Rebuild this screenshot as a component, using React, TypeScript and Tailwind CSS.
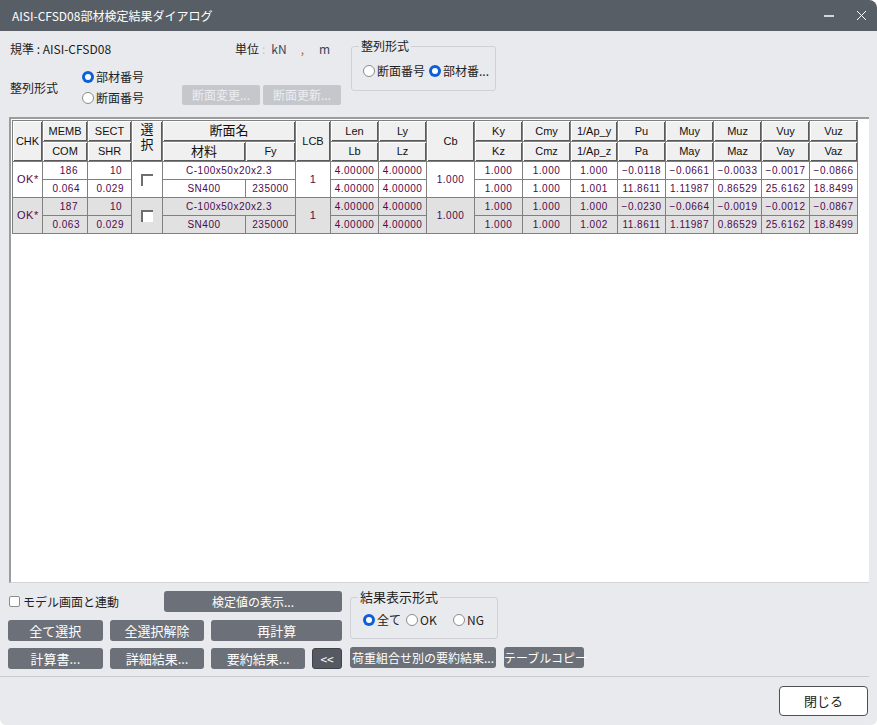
import React from "react";

// 部材検定結果ダイアログ (AISI-CFSD08)

type Row = {
  chk: string;
  memb: string;
  com: string;
  sect: string;
  shr: string;
  name: string;
  mat: string;
  fy: string;
  lcb: string;
  len: string;
  lb: string;
  ly: string;
  lz: string;
  cb: string;
  pairs: [string, string][];
};

const rows: Row[] = [
  {
    chk: "OK*",
    memb: "186",
    com: "0.064",
    sect: "10",
    shr: "0.029",
    name: "C-100x50x20x2.3",
    mat: "SN400",
    fy: "235000",
    lcb: "1",
    len: "4.00000",
    lb: "4.00000",
    ly: "4.00000",
    lz: "4.00000",
    cb: "1.000",
    pairs: [
      ["1.000", "1.000"],
      ["1.000", "1.000"],
      ["1.000", "1.001"],
      ["−0.0118", "11.8611"],
      ["−0.0661", "1.11987"],
      ["−0.0033", "0.86529"],
      ["−0.0017", "25.6162"],
      ["−0.0866", "18.8499"],
    ],
  },
  {
    chk: "OK*",
    memb: "187",
    com: "0.063",
    sect: "10",
    shr: "0.029",
    name: "C-100x50x20x2.3",
    mat: "SN400",
    fy: "235000",
    lcb: "1",
    len: "4.00000",
    lb: "4.00000",
    ly: "4.00000",
    lz: "4.00000",
    cb: "1.000",
    pairs: [
      ["1.000", "1.000"],
      ["1.000", "1.000"],
      ["1.000", "1.002"],
      ["−0.0230", "11.8611"],
      ["−0.0664", "1.11987"],
      ["−0.0019", "0.86529"],
      ["−0.0012", "25.6162"],
      ["−0.0867", "18.8499"],
    ],
  },
];

const pairHeads: [string, string][] = [
  ["Ky", "Kz"],
  ["Cmy", "Cmz"],
  ["1/Ap_y", "1/Ap_z"],
  ["Pu", "Pa"],
  ["Muy", "May"],
  ["Muz", "Maz"],
  ["Vuy", "Vay"],
  ["Vuz", "Vaz"],
];

const TH =
  "border border-[#808080] bg-[#f0f0f0] shadow-[inset_1px_1px_0_#ffffff,inset_-1px_-1px_0_#5a5a5a] text-center font-normal text-[11px] text-[#111] p-0";
const TD = "border border-[#808080] p-0 text-center";

function Radio({ checked, label }: { checked?: boolean; label: string }) {
  return (
    <span className="flex items-center gap-[2px] whitespace-nowrap">
      {checked ? (
        <span className="w-[12px] h-[12px] shrink-0 rounded-full bg-[#0b5fd7] flex items-center justify-center">
          <span className="w-[6px] h-[6px] rounded-full bg-white" />
        </span>
      ) : (
        <span className="w-[12px] h-[12px] shrink-0 rounded-full border border-[#8c8c8c] bg-white" />
      )}
      <span>{label}</span>
    </span>
  );
}

function Btn({
  className,
  children,
}: {
  className: string;
  children: React.ReactNode;
}) {
  return (
    <button
      className={
        "h-[21px] rounded-[3px] bg-[#6b7079] text-white text-[12px] leading-none whitespace-nowrap " +
        className
      }
    >
      {children}
    </button>
  );
}

function CheckCell() {
  return (
    <span className="inline-block w-[12px] h-[12px] bg-white border-t-2 border-l-2 border-[#6e6e6e] align-middle" />
  );
}

export default function App() {
  return (
    <div className="w-[877px] h-[725px] bg-white">
      <div className="w-[877px] h-[725px] bg-[#e9eaee] flex flex-col rounded-tr-[8px] rounded-b-[6px] overflow-hidden font-['Noto_Sans_CJK_JP','Liberation_Sans',sans-serif] text-[12px] text-[#222]">
        {/* Title bar */}
        <div className="h-[31px] bg-[#585e66] flex items-center pl-[12px] pr-[10px] text-white">
          <span className="text-[12px]">AISI-CFSD08部材検定結果ダイアログ</span>
          <div className="ml-auto flex items-center gap-[22px]">
            <svg width="10" height="10" viewBox="0 0 10 10">
              <line x1="0" y1="5" x2="10" y2="5" stroke="#ffffff" strokeWidth="1.5" />
            </svg>
            <svg width="11" height="11" viewBox="0 0 11 11">
              <path d="M1 1 L10 10 M10 1 L1 10" stroke="#ffffff" strokeWidth="1" />
            </svg>
          </div>
        </div>

        {/* Top settings */}
        <div className="h-[86px] flex">
          <div className="w-[341px] pl-[10px] pt-[9px]">
            <div className="h-[18px] flex items-center">
              <span className="w-[225px]">規準 : AISI-CFSD08</span>
              <span>単位</span>
              <span className="ml-[3px] text-[#c8c8c8]">:</span>
              <span className="ml-[6px] text-[#3b4456]">kN</span>
              <span className="ml-[14px] text-[#c06030]">,</span>
              <span className="ml-[15px] text-[#3b4456]">m</span>
            </div>
            <div className="flex mt-[10px]">
              <span className="w-[74px] self-center">整列形式</span>
              <div className="w-[103px] flex flex-col gap-[3px] leading-[18px]">
                <Radio checked label="部材番号" />
                <Radio label="断面番号" />
              </div>
              <div className="self-end flex gap-[3px] mb-[2px]">
                <button className="w-[78px] h-[20px] rounded-[2px] bg-[#c4c7cc] text-[#eceef1] text-[12px]">
                  断面変更...
                </button>
                <button className="w-[78px] h-[20px] rounded-[2px] bg-[#c4c7cc] text-[#eceef1] text-[12px]">
                  断面更新...
                </button>
              </div>
            </div>
          </div>
          <fieldset className="ml-[10px] mt-[8px] w-[145px] h-[52px] border border-[#cfd1d6] rounded-[3px] pl-[11px] pt-[9px]">
            <legend className="px-[2px] leading-[14px] -ml-[4px]">整列形式</legend>
            <div className="flex gap-[4px] whitespace-nowrap">
              <Radio label="断面番号" />
              <Radio checked label="部材番..." />
            </div>
          </fieldset>
        </div>

        {/* Results table */}
        <div className="ml-[9px] w-[860px] h-[466px] bg-white border-t-2 border-l-2 border-[#9c9c9c] border-b border-b-[#d4d4d4] pt-[1px] pl-[1px]">
          <table className="table-fixed border-collapse w-[846px] font-['Liberation_Sans','Noto_Sans_CJK_JP',sans-serif]">
            <colgroup>
              <col className="w-[30px]" />
              <col className="w-[45px]" />
              <col className="w-[44px]" />
              <col className="w-[31px]" />
              <col className="w-[83px]" />
              <col className="w-[50px]" />
              <col className="w-[35px]" />
              <col className="w-[48px]" />
              <col className="w-[48px]" />
              <col className="w-[48px]" />
              <col className="w-[48px]" />
              <col className="w-[48px]" />
              <col className="w-[47px]" />
              <col className="w-[48px]" />
              <col className="w-[48px]" />
              <col className="w-[48px]" />
              <col className="w-[48px]" />
              <col className="w-[48px]" />
            </colgroup>
            <thead>
              <tr className="h-[20px]">
                <th rowSpan={2} className={TH}>CHK</th>
                <th className={TH}>MEMB</th>
                <th className={TH}>SECT</th>
                <th rowSpan={2} className={TH + " align-top"}>
                  <div className="text-[13px] leading-[15px] pt-[1px]">
                    <div>選</div>
                    <div>択</div>
                  </div>
                </th>
                <th colSpan={2} className={TH + " text-[13px]"}>断面名</th>
                <th rowSpan={2} className={TH}>LCB</th>
                <th className={TH}>Len</th>
                <th className={TH}>Ly</th>
                <th rowSpan={2} className={TH}>Cb</th>
                {pairHeads.map(([a]) => (
                  <th key={a} className={TH}>{a}</th>
                ))}
              </tr>
              <tr className="h-[20px]">
                <th className={TH}>COM</th>
                <th className={TH}>SHR</th>
                <th className={TH + " text-[13px]"}>材料</th>
                <th className={TH}>Fy</th>
                <th className={TH}>Lb</th>
                <th className={TH}>Lz</th>
                {pairHeads.map(([, b]) => (
                  <th key={b} className={TH}>{b}</th>
                ))}
              </tr>
            </thead>
            <tbody className="text-[10px] tracking-[0.5px] text-[#4e0a4e]">
              {rows.map((r, i) => {
                const bg = i % 2 === 0 ? "bg-white" : "bg-[#e1e1e1]";
                return (
                  <React.Fragment key={r.memb}>
                    <tr className={"h-[18px] " + bg}>
                      <td rowSpan={2} className={TD + " text-left pl-[4px] text-[11px]"}>{r.chk}</td>
                      <td className={TD + " text-right pr-[9px]"}>{r.memb}</td>
                      <td className={TD + " text-right pr-[9px]"}>{r.sect}</td>
                      <td rowSpan={2} className={TD}>
                        <CheckCell />
                      </td>
                      <td colSpan={2} className={TD}>{r.name}</td>
                      <td rowSpan={2} className={TD + " text-[11px]"}>{r.lcb}</td>
                      <td className={TD}>{r.len}</td>
                      <td className={TD}>{r.ly}</td>
                      <td rowSpan={2} className={TD}>{r.cb}</td>
                      {r.pairs.map(([a], k) => (
                        <td key={k} className={TD}>{a}</td>
                      ))}
                    </tr>
                    <tr className={"h-[18px] " + bg}>
                      <td className={TD + " text-right pr-[7px]"}>{r.com}</td>
                      <td className={TD + " text-right pr-[7px]"}>{r.shr}</td>
                      <td className={TD}>{r.mat}</td>
                      <td className={TD}>{r.fy}</td>
                      <td className={TD}>{r.lb}</td>
                      <td className={TD}>{r.lz}</td>
                      {r.pairs.map(([, b], k) => (
                        <td key={k} className={TD}>{b}</td>
                      ))}
                    </tr>
                  </React.Fragment>
                );
              })}
            </tbody>
          </table>
        </div>

        {/* Bottom controls */}
        <div className="h-[94px] mr-[8px] border-b border-[#c9cbd0] flex">
          <div className="w-[342px] pl-[8px] pt-[8px] flex flex-col">
            <div className="h-[21px] flex items-center">
              <span className="w-[11px] h-[11px] rounded-[2px] border border-[#8c8c8c] bg-white ml-[1px]" />
              <span className="ml-[3px]">モデル画面と連動</span>
              <Btn className="ml-auto w-[178px]">検定値の表示...</Btn>
            </div>
            <div className="mt-[8px] flex gap-[7px]">
              <Btn className="w-[95px] h-[20px] text-[13px]">全て選択</Btn>
              <Btn className="w-[95px] h-[20px] text-[13px]">全選択解除</Btn>
              <Btn className="w-[131px] h-[20px] text-[13px]">再計算</Btn>
            </div>
            <div className="mt-[7px] flex gap-[7px]">
              <Btn className="w-[95px] text-[13px]">計算書...</Btn>
              <Btn className="w-[95px] text-[13px]">詳細結果...</Btn>
              <Btn className="w-[94px] text-[13px]">要約結果...</Btn>
              <Btn className="w-[30px] bg-[#555a62] border border-[#3f434a] text-[11px]">&lt;&lt;</Btn>
            </div>
          </div>
          <div className="ml-[8px] pt-[7px] flex flex-col">
            <fieldset className="w-[148px] h-[49px] border border-[#cfd1d6] rounded-[3px] pl-[12px] pt-[7px]">
              <legend className="px-[2px] text-[13px] leading-[14px] -ml-[5px]">結果表示形式</legend>
              <div className="flex text-[12px]">
                <span className="w-[43px]"><Radio checked label="全て" /></span>
                <span className="w-[47px]"><Radio label="OK" /></span>
                <Radio label="NG" />
              </div>
            </fieldset>
            <div className="mt-[8px] flex gap-[8px]">
              <Btn className="w-[146px] text-[12px]">荷重組合せ別の要約結果...</Btn>
              <Btn className="w-[80px] text-[11px]">テーブルコピー</Btn>
            </div>
          </div>
        </div>

        {/* Footer */}
        <div className="flex-1 flex justify-end pr-[9px] pt-[9px]">
          <button className="w-[89px] h-[30px] rounded-[4px] border border-[#4c4f55] bg-white text-[13px] text-[#222]">
            閉じる
          </button>
        </div>
      </div>
    </div>
  );
}
